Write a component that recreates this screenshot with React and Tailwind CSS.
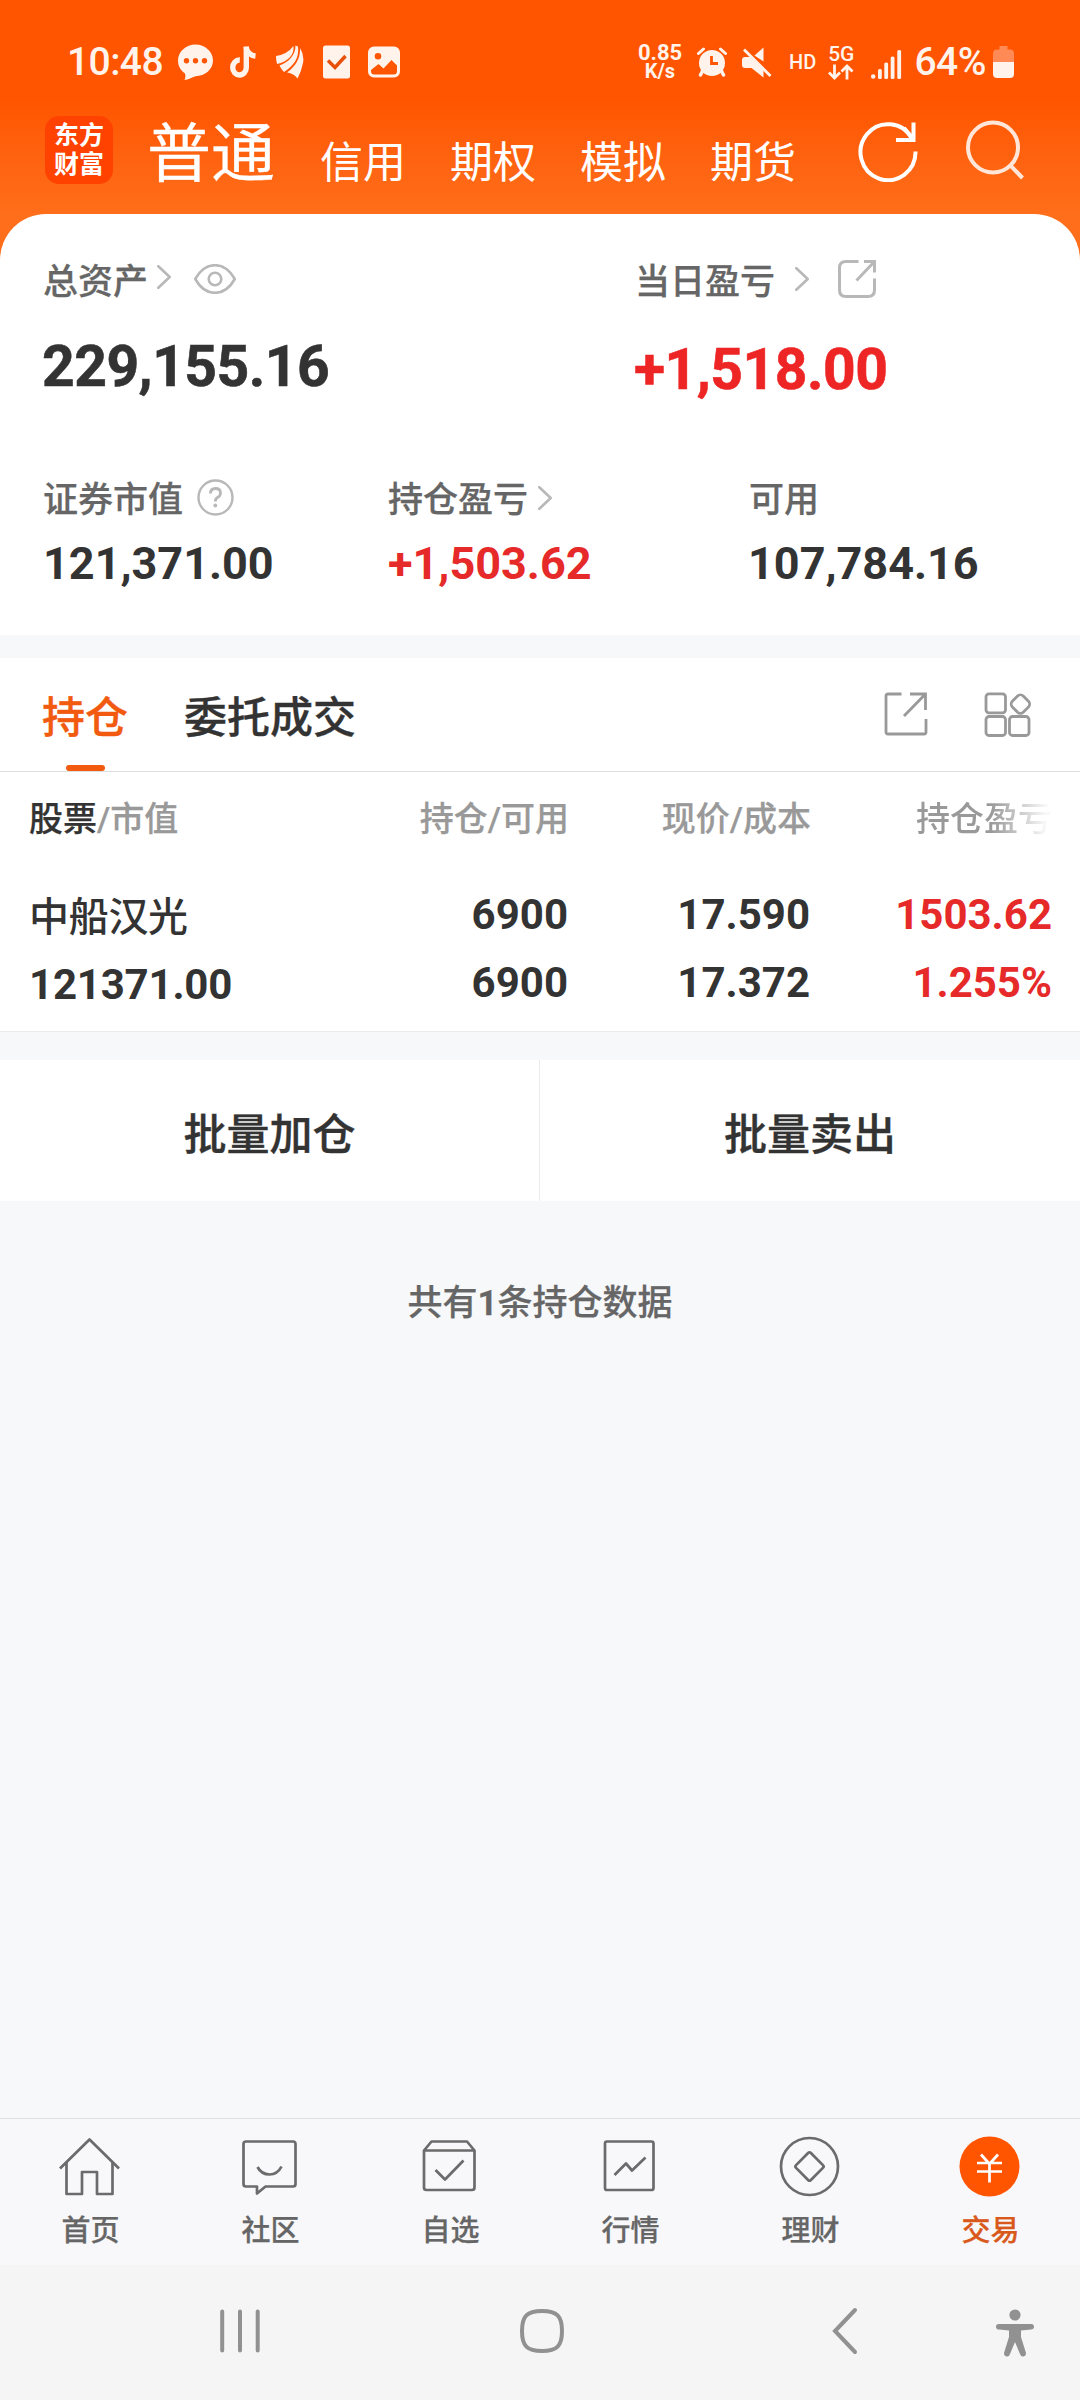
const Chevron = ({ className }) => (
  <svg width="14" height="24" viewBox="0 0 14 24" fill="none" stroke="#b8b8b8" strokeWidth="2.6" strokeLinecap="round" strokeLinejoin="round" className={className}>
    <path d="M1.3 1.2 L12.7 12 L1.3 22.8" />
  </svg>
);

const StatusBar = () => (
  <div className="flex h-[100px] items-center pt-[24px] pl-[67px] pr-[66px] text-[#fff3eb]">
    <span className="w-[111px] text-[39px] font-medium tracking-[-0.6px] leading-[40px]">10:48</span>

    <svg width="35" height="36" viewBox="0 0 35 36" fill="currentColor">
      <path fillRule="evenodd" d="M17.5 0.5C27 0.5 35 7.500 35 16.500S27 32 17.500 32.200C14 33.500 10 35.500 6.500 36C7.500 34 7.700 31.500 7 29.500C2.800 26.700 0 22 0 16.500C0 7.500 8 0.500 17.500 0.500ZM8.500 14a2.700 2.700 0 1 0 0 5.400a2.700 2.700 0 0 0 0-5.400ZM17.500 14a2.700 2.700 0 1 0 0 5.400a2.700 2.700 0 0 0 0-5.400ZM26.500 14a2.700 2.700 0 1 0 0 5.400a2.700 2.700 0 0 0 0-5.400Z" />
    </svg>
    <svg width="26" height="32" viewBox="0 0 26 32" fill="none" stroke="currentColor" className="ml-[17px]">
      <path d="M16.300 0.500V21A6.800 7.500 0 1 1 9.800 14" strokeWidth="5.400" />
      <path d="M16 1C17 6 20 9.500 25.500 10" strokeWidth="5.400" />
    </svg>
    <svg width="28" height="34" viewBox="0 0 28 34" fill="currentColor" className="ml-[20px]">
      <path d="M0 11Q11 9.500 17.500 1C18.500 10 12 16.500 1 19Q0 15 0 11Z" />
      <path d="M3.500 20.500C13 17 19.500 10 19.500 0.500L22 1.500C23.500 14 17 21 8 27Q5 24 3.500 20.500Z" />
      <path d="M24 3Q28.500 10 27 18Q25.500 26 21.500 33.500Q18 28.500 11 27.500C20 21 24.500 13 24 3Z" />
    </svg>
    <svg width="27" height="34" viewBox="0 0 27 34" className="ml-[19px]">
      <rect y="0.5" width="27" height="33" rx="2.5" fill="currentColor" />
      <path d="M5 15.500L12 22.500L22.500 11" fill="none" stroke="#e8500a" strokeWidth="3.400" />
    </svg>
    <svg width="32" height="32" viewBox="0 0 32 32" className="ml-[18px]">
      <path fill="currentColor" fillRule="evenodd" d="M6 0.500H26A6 6 0 0 1 32 6.500V25.500A6 6 0 0 1 26 31.500H6A6 6 0 0 1 0 25.500V6.500A6 6 0 0 1 6 0.500ZM10 7a3.300 3.300 0 1 0 0 6.600a3.300 3.300 0 0 0 0-6.600ZM3 24L10.500 18L15.500 22.500L23.500 14L29 19.500V25Q29 28.500 25.500 28.500H6.500Q3 28.500 3 25Z" />
    </svg>

    <div className="ml-auto flex items-center">
      <div className="w-[44px] text-center font-bold">
        <p className="text-[22px] leading-[19px]">0.85</p>
        <p className="text-[20px] leading-[19px]">K/s</p>
      </div>
      <svg width="30" height="30" viewBox="0 0 30 30" fill="none" stroke="currentColor" className="ml-[15px]">
        <circle cx="15" cy="16" r="13" fill="currentColor" stroke="none" />
        <path d="M1.500 6.500L6.500 2M28.500 6.500L23.500 2" strokeWidth="3" strokeLinecap="round" />
        <path d="M5.500 24L3.500 28M24.500 24L26.500 28" strokeWidth="3.500" strokeLinecap="round" />
        <path d="M14.500 9V16.500H21" stroke="#ff5500" strokeWidth="2.800" />
      </svg>
      <svg width="30" height="31" viewBox="0 0 30 31" fill="currentColor" className="ml-[15px]">
        <path d="M21.500 0.500V14.500L12.500 8.500ZM3 10H8L21.500 23V30.500L9.500 21H3Q0 21 0 18V13Q0 10 3 10Z" />
        <path d="M2 2.500L28.500 29" stroke="currentColor" strokeWidth="2.800" />
      </svg>
      <span className="ml-[17px] text-[20px] font-medium leading-[20px]">HD</span>
      <div className="ml-[12px] flex flex-col items-center">
        <span className="text-[21px] font-medium leading-[18px]">5G</span>
        <svg width="26" height="16" viewBox="0 0 26 16" fill="none" stroke="currentColor" strokeWidth="2.800" className="mt-[1px]">
          <path d="M6.500 0.500V14M1 8.500L6.500 14L12 8.500M19 15.500V2M13.500 7.500L19 2L24.500 7.500" />
        </svg>
      </div>
      <svg width="31" height="29" viewBox="0 0 31 29" fill="currentColor" className="mt-[4px] ml-[17px]">
        <circle cx="2.200" cy="26.500" r="2.200" />
        <rect x="7" y="19" width="3.800" height="10" rx="1.500" />
        <rect x="13.300" y="12.500" width="3.800" height="16.500" rx="1.500" />
        <rect x="19.700" y="6.500" width="3.800" height="22.500" rx="1.500" />
        <rect x="26.300" y="0" width="3.800" height="29" rx="1.500" />
      </svg>
      <span className="ml-[12px] text-[39px] font-medium leading-[40px] tracking-[-0.5px]">64%</span>
      <svg width="21" height="32" viewBox="0 0 21 32" className="ml-[7px]">
        <path d="M6.500 0H14.500V3.500H17Q21 3.500 21 7.500V16H0V7.500Q0 3.500 4 3.500H6.500Z" fill="#ff8a55" />
        <path d="M0 16H21V28Q21 32 17 32H4Q0 32 0 28Z" fill="currentColor" />
      </svg>
    </div>
  </div>
);

const TopNav = () => (
  <div className="flex h-[114px] pl-[45px] text-white">
    <div className="mt-[16px] flex h-[68px] w-[68px] flex-col items-center justify-center rounded-[14px] bg-[#ff4200] text-[25px] font-bold leading-[29px]">
      <span>东方</span>
      <span>财富</span>
    </div>
    <div className="ml-[34px] flex h-[95px] items-start">
      <span className="text-[64px] leading-[109px] [-webkit-text-stroke:0.3px]">普通</span>
      <div className="ml-[45px] flex gap-[44px] text-[43px] leading-[126px]">
        <span>信用</span>
        <span>期权</span>
        <span>模拟</span>
        <span>期货</span>
      </div>
    </div>
    <svg width="60" height="62" viewBox="0 0 60 62" fill="none" stroke="currentColor" strokeWidth="4" className="mt-[20px] ml-[62px]">
      <path d="M57.500 31.500A27.500 28 0 1 1 54 18.500" />
      <path d="M55.500 2.500V20H38" />
      <path d="M46 8L55 19" />
    </svg>
    <svg width="60" height="62" viewBox="0 0 60 62" fill="none" stroke="#ffe6d8" strokeWidth="4" className="mt-[19px] ml-[48px]">
      <circle cx="27" cy="28.500" r="25" />
      <path d="M44 46L56.500 59" />
    </svg>
  </div>
);

const Summary = () => (
  <div className="h-[421px] rounded-t-[46px] bg-white text-[#333]">
    <div className="flex pl-[42px]">
      <div className="w-[592px]">
        <div className="flex h-[56px] mt-[40px] items-center text-[#666]">
          <span className="pt-[2px] pl-px text-[35px] font-medium leading-[56px] [-webkit-text-stroke:0.25px]">总资产</span>
          <Chevron className="mb-[10px] ml-[9px]" />
          <svg width="42" height="30" viewBox="0 0 42 30" fill="none" stroke="#b8b8b8" strokeWidth="2.600" className="mb-[6px] ml-[23px]">
            <path d="M1.200 15Q9 1.200 21 1.200T40.800 15Q33 28.800 21 28.800T1.200 15Z" strokeLinejoin="round" />
            <circle cx="21" cy="15" r="6.300" />
          </svg>
        </div>
        <p className="mt-[23px] text-[57px] font-bold leading-[68px] tracking-[-0.5px] [-webkit-text-stroke:0.6px]">229,155.16</p>
      </div>
      <div>
        <div className="flex h-[56px] mt-[40px] items-center text-[#666]">
          <span className="pt-[2px] pl-px text-[35px] font-medium leading-[56px] [-webkit-text-stroke:0.25px]">当日盈亏</span>
          <Chevron className="mb-[6px] ml-[20px]" />
          <svg width="38" height="40" viewBox="0 0 38 40" fill="none" stroke="#b8b8b8" strokeWidth="3" className="mb-[6px] ml-[29px]">
            <path d="M20.500 2.500H8Q1.500 2.500 1.500 9V31Q1.500 37.500 8 37.500H30Q36.500 37.500 36.500 31V19.500" />
            <path d="M26 2.500H36.500V13.500M36.500 2.500L18.500 21.500" />
          </svg>
        </div>
        <p className="mt-[26px] text-[57px] font-bold leading-[68px] tracking-[-0.5px] text-[#ee2525] [-webkit-text-stroke:0.6px]">+1,518.00</p>
      </div>
    </div>
    <div className="mt-[69px] flex pl-[43px]">
      <div className="w-[345px]">
        <div className="flex h-[56px] items-center text-[#666]">
          <span className="text-[35px] font-medium leading-[56px] [-webkit-text-stroke:0.25px]">证券市值</span>
          <svg width="37" height="37" viewBox="0 0 37 37" fill="none" stroke="#b8b8b8" strokeWidth="2.400" className="mb-[8px] ml-[14px]">
            <circle cx="18.500" cy="18.500" r="17" />
            <path d="M13.500 14.500Q13.500 9.500 18.500 9.500T23.500 14Q23.500 17 20.500 18.500Q18.300 19.800 18.300 22.500" strokeWidth="2.800" />
            <circle cx="18.300" cy="26.500" r="1.900" fill="#b8b8b8" stroke="none" />
          </svg>
        </div>
        <p className="mt-[7px] text-[45px] font-bold leading-[56px]">121,371.00</p>
      </div>
      <div className="w-[361px]">
        <div className="flex h-[56px] items-center text-[#666]">
          <span className="text-[35px] font-medium leading-[56px] [-webkit-text-stroke:0.25px]">持仓盈亏</span>
          <Chevron className="mb-[7px] ml-[10px]" />
        </div>
        <p className="mt-[7px] text-[45px] font-bold leading-[56px] text-[#e62a2a]">+1,503.62</p>
      </div>
      <div>
        <p className="text-[35px] font-medium leading-[56px] text-[#666] [-webkit-text-stroke:0.25px]">可用</p>
        <p className="mt-[7px] -ml-px text-[45px] font-bold leading-[56px]">107,784.16</p>
      </div>
    </div>
  </div>
);

const Tabs = () => (
  <div className="flex h-[114px] border-b border-[#dedede] bg-white pl-[42px] text-[43px] font-medium text-[#333] [-webkit-text-stroke:0.35px]">
    <div className="flex flex-col items-center text-[#f25a10]">
      <span className="h-[107px] leading-[121px]">持仓</span>
      <div className="h-[6px] w-[39px] rounded-full bg-[#f25a10]" />
    </div>
    <span className="ml-[56px] leading-[121px]">委托成交</span>
    <svg width="44" height="44" viewBox="0 0 44 44" fill="none" stroke="#999" strokeWidth="2.800" className="mt-[34px] ml-auto">
      <path d="M17.500 2H4Q2 2 2 4V40Q2 42 4 42H40Q42 42 42 40V27" />
      <path d="M26 2H41.500V18M41.500 2L20 24" />
    </svg>
    <svg width="48" height="46" viewBox="0 0 48 46" fill="none" stroke="#999" strokeWidth="2.800" className="mt-[34px] mr-[48px] ml-[56px]">
      <rect x="2" y="1.800" width="19.500" height="19" rx="3" />
      <rect x="2" y="24.500" width="19.500" height="19" rx="3" />
      <rect x="25.500" y="24.500" width="19.500" height="19" rx="3" />
      <rect x="28.700" y="4.400" width="15.400" height="15.400" rx="4" transform="rotate(45 36.400 12.100)" />
    </svg>
  </div>
);

const Holdings = () => (
  <div className="h-[260px] border-b border-[#ececec] bg-white pl-[29px] text-[#333]">
    <div className="grid h-[94px] grid-cols-[260px_280px_242px_241px] text-right text-[34px] font-medium leading-[95px] text-[#999] [-webkit-text-stroke:0.25px]">
      <span className="text-left"><span className="text-[#333]">股票</span>/市值</span>
      <span>持仓/可用</span>
      <span>现价/成本</span>
      <span className="ml-auto w-[136px] bg-linear-to-r from-[#999] from-55% to-[#f8f8f8] to-95% bg-clip-text text-transparent [-webkit-text-stroke:0px]">持仓盈亏</span>
    </div>
    <div className="grid grid-cols-[260px_279px_242px_242px] text-right text-[42px] font-bold leading-[68px]">
      <div className="text-left">
        <p className="mt-[18px] text-[40px] font-medium tracking-[-0.3px]">中船汉光</p>
        <p className="mt-[-1px] tracking-[-0.2px]">121371.00</p>
      </div>
      <div className="mt-[15px]">
        <p>6900</p>
        <p>6900</p>
      </div>
      <div className="mt-[15px]">
        <p>17.590</p>
        <p>17.372</p>
      </div>
      <div className="mt-[15px] text-[#e62a2a]">
        <p>1503.62</p>
        <p>1.255%</p>
      </div>
    </div>
  </div>
);

const tabs = [
  {
    name: "首页",
    icon: (
      <>
        <path d="M1.500 31L31 2L60.500 31" />
        <path d="M8 25V56.500H23.500V34.500H38.500V56.500H54V25" />
      </>
    ),
  },
  {
    name: "社区",
    icon: (
      <>
        <path d="M7.500 4H54.500Q57 4 57 6.500V46.500Q57 49 54.500 49H27L18.500 56V49H7.500Q5 49 5 46.500V6.500Q5 4 7.500 4Z" />
        <path d="M19 29.500Q23 37 31 37T43 29" />
      </>
    ),
  },
  {
    name: "自选",
    icon: (
      <>
        <path d="M5.500 13L13 4H48.500L56 13M5.500 13V50Q5.500 52.500 8 52.500H53.500Q56 52.500 56 50V13Z" />
        <path d="M17 32.500L26.500 42L45 23" />
      </>
    ),
  },
  {
    name: "行情",
    icon: (
      <>
        <rect x="6.500" y="4" width="48.500" height="48.500" rx="2" />
        <path d="M16 37.500L27.500 26L33.500 33L47 20" />
      </>
    ),
  },
  {
    name: "理财",
    icon: (
      <>
        <circle cx="31" cy="29" r="28.500" />
        <rect x="20.500" y="18.500" width="21" height="21" rx="2" transform="rotate(45 31 29)" />
      </>
    ),
  },
  {
    name: "交易",
    active: true,
    icon: (
      <>
        <circle cx="31" cy="29" r="30" fill="#ff5500" stroke="none" />
        <path d="M22.500 17L31 26.500L39.500 17M31 26.500V45M18.500 25.500H43.500M18.500 34H43.500" stroke="#fff" />
      </>
    ),
  },
];

const BottomTabs = () => (
  <div className="grid h-[147px] grid-cols-6 border-t border-[#dfe0e2] bg-[#f8f8fb]">
    {tabs.map((tab) => (
      <div key={tab.name} className="flex flex-col items-center pt-[18px]">
        <svg width="62" height="60" viewBox="0.5 -0.5 62 60" fill="none" stroke="#6b6b6b" strokeWidth="2.700" strokeLinejoin="round" className="overflow-visible">
          {tab.icon}
        </svg>
        <span className={`mt-[14px] pl-px text-[29px] font-medium leading-[40px] [-webkit-text-stroke:0.25px] ${tab.active ? "text-[#d9591c]" : "text-[#666]"}`}>{tab.name}</span>
      </div>
    ))}
  </div>
);

const SystemNav = () => (
  <div className="flex h-[135px] items-center bg-[#f5f5f5] pl-[220px] text-[#919191]">
    <svg width="40" height="44" viewBox="0 0 40 44" stroke="currentColor" strokeWidth="4" strokeLinecap="round" className="mb-[4px]">
      <path d="M2.200 2.500V41.500M20 2.500V41.500M37.700 2.500V41.500" />
    </svg>
    <svg width="46" height="46" viewBox="0 0 46 46" fill="none" stroke="currentColor" strokeWidth="4" className="mb-[4px] ml-[259px]">
      <path d="M23 3C38 3 43 8 43 23S38 43 23 43S3 38 3 23S8 3 23 3Z" />
    </svg>
    <svg width="26" height="48" viewBox="0 0 26 48" fill="none" stroke="currentColor" strokeWidth="4" strokeLinecap="round" className="mb-[4px] ml-[267px]">
      <path d="M23 3L3 24L23 45" />
    </svg>
    <svg width="40" height="48" viewBox="0 0 40 48" fill="currentColor" className="ml-[137px]">
      <circle cx="20" cy="6" r="5.600" />
      <path d="M4 15H36Q39 15 39 17.700T36 20.500L26 21.500V28L31 44Q31 47 28.500 47.500T25 45L20 33L15 45Q14 48 11.500 47.500T9 44L14 28V21.500L4 20.500Q1 20.500 1 17.700T4 15Z" />
    </svg>
  </div>
);

export default function App() {
  return (
    <div className="flex h-[2400px] w-[1080px] flex-col overflow-hidden bg-[#f7f8fa] font-[Roboto,'Noto_Sans_CJK_SC',sans-serif]">
      <div className="bg-linear-to-b from-[#ff5500] from-[100px] to-[#ff6e1a] to-[214px]">
        <StatusBar />
        <TopNav />
        <Summary />
      </div>

      <div className="mt-[23px]">
        <Tabs />
        <Holdings />
      </div>

      <div className="mt-[28px] grid h-[141px] grid-cols-2 bg-white text-center text-[43px] font-medium leading-[150px] text-[#333] [-webkit-text-stroke:0.35px]">
        <span className="h-[141px] border-r border-[#ececec]">批量加仓</span>
        <span className="h-[141px]">批量卖出</span>
      </div>
      <p className="mt-[77px] text-center text-[35px] font-medium leading-[52px] text-[#666] [-webkit-text-stroke:0.25px]">
        共有<span className="font-bold">1</span>条持仓数据
      </p>

      <div className="mt-auto">
        <BottomTabs />
        <SystemNav />
      </div>
    </div>
  );
}
